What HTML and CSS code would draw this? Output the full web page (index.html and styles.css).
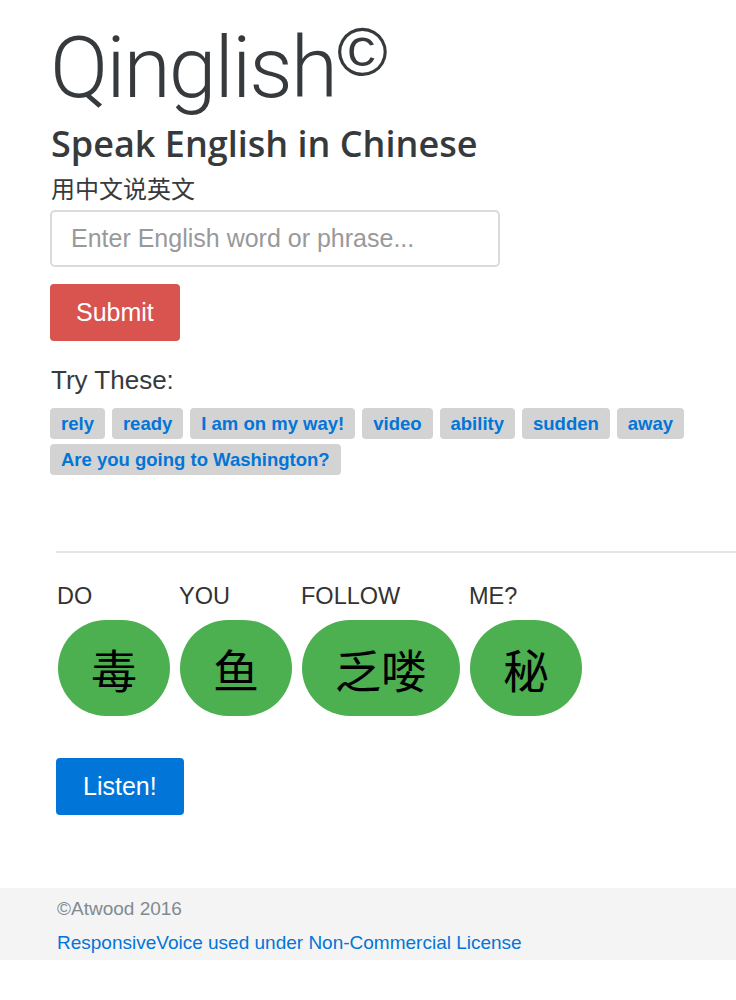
FILE: index.html
```html
<!DOCTYPE html>
<html lang="en">
<head>
    <meta charset="UTF-8">
    <meta name="viewport" content="width=device-width, initial-scale=1.0">
    <title>Qinglish</title>
    <link rel="stylesheet" href="styles.css">
</head>
<body>
    <div class="intro">
        <h1 class="brand">Qinglish<span class="copy">©</span></h1>
        <h2 class="tagline">Speak English in Chinese</h2>
        <h4 class="tagline-cn">用中文说英文</h4>
        <input type="text" class="word-input" placeholder="Enter English word or phrase..." />
        <div>
            <button class="btn btn-submit">Submit</button>
        </div>
        <h4 class="try-title">Try These:</h4>
        <div class="samples">
            <span class="sample">rely</span>
            <span class="sample">ready</span>
            <span class="sample">I am on my way!</span>
            <span class="sample">video</span>
            <span class="sample">ability</span>
            <span class="sample">sudden</span>
            <span class="sample">away</span>
            <span class="sample">Are you going to Washington?</span>
        </div>
    </div>

    <hr class="divider">

    <div class="result">
        <div class="words">
            <div class="word">
                <div class="word-en">DO</div>
                <div class="word-cn">毒</div>
            </div>
            <div class="word">
                <div class="word-en">YOU</div>
                <div class="word-cn">鱼</div>
            </div>
            <div class="word">
                <div class="word-en">FOLLOW</div>
                <div class="word-cn">乏喽</div>
            </div>
            <div class="word">
                <div class="word-en">ME?</div>
                <div class="word-cn">秘</div>
            </div>
        </div>
        <button class="btn btn-listen">Listen!</button>
    </div>

    <footer class="footer">
        <div class="footer-copy">©Atwood 2016</div>
        <a class="footer-link" href="#">ResponsiveVoice used under Non-Commercial License</a>
    </footer>
</body>
</html>
```

FILE: styles.css
```css
/* Qinglish page */
body {
    margin: 0;
    font-family: "Liberation Sans", "Noto Sans CJK SC", sans-serif;
    color: #373a3c;
    background: #fff;
}
.intro {
    padding: 25px 0 0 50px;
}
.brand {
    margin: 0;
    font-family: Roboto, "Liberation Sans", sans-serif;
    font-weight: 300;
    font-size: 86px;
    letter-spacing: -2px;
    line-height: 1;
}
.copy {
    font-family: "Liberation Sans", sans-serif;
    font-size: 69px;
    letter-spacing: 0;
    line-height: 0;
    vertical-align: 22px;
    margin-left: 1px;
}
.tagline {
    margin: 13px 0 0 1px;
    font-family: "Open Sans", "Liberation Sans", sans-serif;
    font-weight: 600;
    font-size: 36px;
    line-height: 40px;
}
.tagline-cn {
    margin: 12px 0 0 1px;
    font-weight: 400;
    font-size: 24px;
    line-height: 28px;
}
.word-input {
    display: block;
    box-sizing: border-box;
    width: 450px;
    height: 57px;
    margin-top: 6px;
    padding: 0 19px;
    border: 2px solid #dadada;
    border-radius: 5px;
    font-family: "Liberation Sans", sans-serif;
    font-size: 25px;
    color: #373a3c;
}
.word-input::placeholder {
    color: #999;
}
.btn {
    box-sizing: border-box;
    height: 57px;
    border: none;
    border-radius: 4px;
    color: #fff;
    font-family: "Liberation Sans", sans-serif;
    font-size: 25px;
    cursor: pointer;
}
.btn-submit {
    margin-top: 17px;
    padding: 0 26px;
    background-color: #d9534f;
}
.try-title {
    margin: 24px 0 0 1px;
    font-weight: 400;
    font-size: 26px;
    line-height: 30px;
}
.samples {
    display: flex;
    flex-wrap: wrap;
    gap: 5px 7px;
    margin-top: 13px;
    max-width: 660px;
}
.sample {
    padding: 0 11px;
    height: 31px;
    line-height: 31px;
    background: #d3d3d3;
    border-radius: 4px;
    color: #0275d8;
    font-weight: 700;
    font-size: 18.5px;
}
.divider {
    margin: 76px 0 0 56px;
    border: none;
    border-top: 2px solid #e5e5e5;
}
.result {
    padding: 0 0 0 56px;
}
.words {
    display: flex;
    gap: 10px;
    margin-top: 29px;
    padding-left: 2px;
}
.word-en {
    margin-left: -1px;
    font-size: 23.5px;
    line-height: 28px;
    color: #333;
}
.word-cn {
    margin-top: 10px;
    height: 96px;
    padding: 0 33px;
    border-radius: 48px;
    background: #4caf50;
    color: #000;
    font-family: "Noto Sans CJK SC", sans-serif;
    font-size: 46px;
    line-height: 96px;
}
.btn-listen {
    margin-top: 42px;
    padding: 0 27px;
    background-color: #0275d8;
}
.footer {
    margin-top: 73px;
    padding: 10px 57px 6px;
    background: #f4f4f4;
}
.footer-copy {
    font-size: 19px;
    line-height: 22px;
    color: #818a91;
}
.footer-link {
    display: block;
    margin-top: 12px;
    font-size: 19px;
    line-height: 22px;
    color: #0275d8;
    text-decoration: none;
}
```
